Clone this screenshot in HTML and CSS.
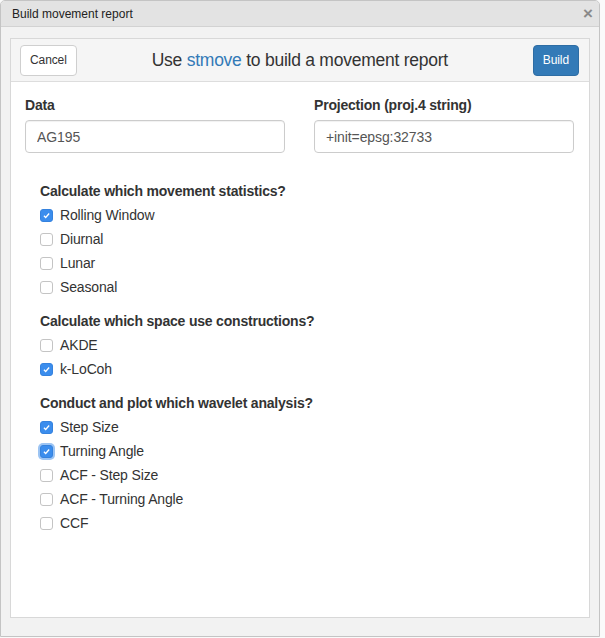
FILE: index.html
```html
<!DOCTYPE html>
<html lang="en">
<head>
  <meta charset="UTF-8" />
  <title>Build movement report</title>
  <link rel="stylesheet" href="styles.css">
</head>
<body>
  <div class="window">
    <div class="titlebar">
      <span>Build movement report</span>
      <span class="close">&times;</span>
    </div>

    <div class="content">
      <div class="panel">
        <div class="panel-head">
          <button class="btn">Cancel</button>
          <h1>Use <span class="pkg">stmove</span> to build a movement report</h1>
          <button class="btn btn-primary">Build</button>
        </div>

        <div class="panel-body">
          <div class="fields">
            <div class="field">
              <label>Data</label>
              <input type="text" value="AG195">
            </div>
            <div class="field">
              <label>Projection (proj.4 string)</label>
              <input type="text" value="+init=epsg:32733">
            </div>
          </div>

          <div class="group">
            <h3>Calculate which movement statistics?</h3>
            <div class="check"><span class="box on"><svg viewBox="0 0 12 12"><path d="M3.2 6.3 L5.1 8.2 L8.9 3.8" /></svg></span>Rolling Window</div>
            <div class="check"><span class="box"></span>Diurnal</div>
            <div class="check"><span class="box"></span>Lunar</div>
            <div class="check"><span class="box"></span>Seasonal</div>
          </div>

          <div class="group">
            <h3>Calculate which space use constructions?</h3>
            <div class="check"><span class="box"></span>AKDE</div>
            <div class="check"><span class="box on"><svg viewBox="0 0 12 12"><path d="M3.2 6.3 L5.1 8.2 L8.9 3.8" /></svg></span>k-LoCoh</div>
          </div>

          <div class="group">
            <h3>Conduct and plot which wavelet analysis?</h3>
            <div class="check"><span class="box on"><svg viewBox="0 0 12 12"><path d="M3.2 6.3 L5.1 8.2 L8.9 3.8" /></svg></span>Step Size</div>
            <div class="check"><span class="box on focus"><svg viewBox="0 0 12 12"><path d="M3.2 6.3 L5.1 8.2 L8.9 3.8" /></svg></span>Turning Angle</div>
            <div class="check"><span class="box"></span>ACF - Step Size</div>
            <div class="check"><span class="box"></span>ACF - Turning Angle</div>
            <div class="check"><span class="box"></span>CCF</div>
          </div>
        </div>
      </div>
    </div>
  </div>
</body>
</html>
```

FILE: styles.css
```css
body {
  margin: 0;
  background: #fafafa;
  font-family: "Liberation Sans", Arial, sans-serif;
  color: #333;
}
.window {
  width: 600px;
  height: 637px;
  border: 1px solid #c4c4c4;
  border-radius: 5px 5px 0 0;
  background: #f2f2f2;
  box-sizing: border-box;
  display: flex;
  flex-direction: column;
  overflow: hidden;
}
.titlebar {
  height: 25px;
  flex-shrink: 0;
  background: #e3e3e3;
  border-bottom: 1px solid #d2d2d2;
  display: flex;
  align-items: center;
  justify-content: space-between;
  padding: 0 6px 0 11px;
  font-size: 12px;
  color: #222;
}
.close {
  font-size: 17px;
  color: #8a8a8a;
  font-weight: bold;
}
.content {
  flex: 1;
  padding: 11px 10px 18px 9px;
  display: flex;
}
.panel {
  flex: 1;
  background: #fff;
  border: 1px solid #d8d8d8;
}
.panel-head {
  height: 42px;
  background: #f5f5f5;
  border-bottom: 1px solid #dddddd;
  display: flex;
  align-items: center;
  justify-content: space-between;
  padding: 0 10px 0 9px;
}
.panel-head h1 {
  margin: 0 0 0 -10px;
  font-size: 17.5px;
  letter-spacing: -0.25px;
  font-weight: normal;
  color: #333;
}
.pkg {
  color: #337ab7;
}
.btn {
  height: 31px;
  padding: 0 9px;
  font-family: inherit;
  font-size: 12px;
  letter-spacing: -0.1px;
  color: #333;
  background: #fff;
  border: 1px solid #cfcfcf;
  border-radius: 4px;
}
.btn-primary {
  background: #337ab7;
  border-color: #2e6da4;
  color: #fff;
  padding: 0 9px;
}
.panel-body {
  padding: 13px 15px 0 14px;
}
.fields {
  display: grid;
  grid-template-columns: 260px 260px;
  column-gap: 29px;
}
.field label {
  display: block;
  font-weight: bold;
  font-size: 14px;
  letter-spacing: -0.2px;
  line-height: 20px;
  margin-bottom: 5px;
}
.field input {
  width: 100%;
  height: 33px;
  box-sizing: border-box;
  border: 1px solid #cccccc;
  border-radius: 4px;
  padding: 0 11px;
  font-family: inherit;
  font-size: 14px;
  letter-spacing: -0.1px;
  color: #555;
  box-shadow: inset 0 1px 1px rgba(0,0,0,0.06);
}
.group {
  padding-left: 15px;
  margin-top: 28px;
}
.group + .group {
  margin-top: 12px;
}
.group h3 {
  margin: 0 0 2px 0;
  font-size: 14px;
  letter-spacing: -0.2px;
  line-height: 20px;
  font-weight: bold;
}
.check {
  height: 24px;
  display: flex;
  align-items: center;
  font-size: 14px;
  letter-spacing: -0.15px;
}
.box {
  width: 11px;
  height: 11px;
  border: 1px solid #c4c4c4;
  border-radius: 3px;
  background: #fff;
  margin-right: 7px;
  display: flex;
}
.box svg {
  width: 11px;
  height: 11px;
}
.box svg path {
  fill: none;
  stroke: #fff;
  stroke-width: 1.4;
}
.box.on {
  background: #3b8ded;
  border-color: #3582de;
}
.box.focus {
  box-shadow: 0 0 0 2px #9cc4f3;
}
```
